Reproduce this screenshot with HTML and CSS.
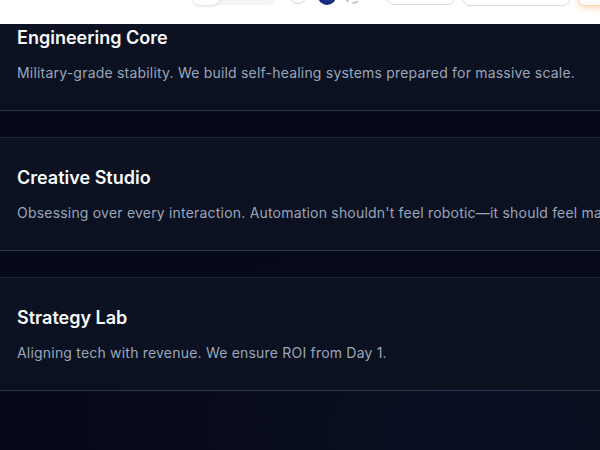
FILE: index.html
```html
<!DOCTYPE html>
<html lang="en">
<head>
<meta charset="utf-8">
<link rel="stylesheet" href="styles.css">
</head>
<body>
<header class="topbar">
  <div class="seg">
    <span class="seg-item active"></span>
    <span class="seg-item"></span>
  </div>
  <span class="dot dot-outline"></span>
  <span class="dot dot-blue"></span>
  <span class="dot dot-dashed"></span>
  <span class="btn btn-a"></span>
  <span class="btn btn-b"></span>
  <span class="btn btn-cta"></span>
</header>
<main class="list">
  <section class="card">
    <h3 class="card-title">Engineering Core</h3>
    <p class="card-text">Military-grade stability. We build self-healing systems prepared for massive scale.</p>
  </section>
  <section class="card">
    <h3 class="card-title">Creative Studio</h3>
    <p class="card-text">Obsessing over every interaction. Automation shouldn't feel robotic—it should feel magical.</p>
  </section>
  <section class="card">
    <h3 class="card-title">Strategy Lab</h3>
    <p class="card-text">Aligning tech with revenue. We ensure ROI from Day 1.</p>
  </section>
</main>
</body>
</html>
```
FILE: styles.css
```css
* { box-sizing: border-box; }
html, body {
  margin: 0;
  padding: 0;
  width: 600px;
  height: 450px;
  overflow: hidden;
}
body {
  font-family: Inter, "Noto Sans", sans-serif;
  background: radial-gradient(ellipse 400px 200px at 480px 430px, #0a1024 0%, rgba(10,16,36,0) 100%), #060919;
}
.topbar {
  position: fixed;
  top: 0;
  left: 0;
  right: 0;
  height: 24px;
  background: #ffffff;
  z-index: 10;
  overflow: hidden;
  display: flex;
  align-items: flex-end;
  padding: 0 0 19px 192px;
}
.seg {
  display: flex;
  width: 84px;
  height: 30px;
  background: #f3f4f6;
  border-radius: 8px;
  flex: none;
}
.seg-item { flex: none; }
.seg-item.active {
  width: 28px;
  height: 30px;
  background: #fff;
  border-radius: 8px;
  box-shadow: 0 1px 3px rgba(0,0,0,0.15);
}
.dot {
  flex: none;
  width: 18px;
  height: 18px;
  border-radius: 50%;
  margin-bottom: 1px;
}
.dot-outline { margin-left: 13px; border: 1px solid #d4d4d8; background: #fff; }
.dot-blue { margin-left: 11px; background: radial-gradient(circle at 50% 30%, #2f4fc8, #162a7a 70%); margin-bottom: 0; }
.dot-dashed { margin-left: 8px; border: 2px dashed #c4c4c8; }
.btn {
  flex: none;
  height: 30px;
  border: 1px solid #d9d9de;
  border-radius: 7px;
  background: #fff;
}
.btn-a { margin-left: 25px; width: 68px; }
.btn-b { margin-left: 8px; width: 107px; margin-bottom: -1px; }
.btn-cta {
  margin-left: 8px;
  width: 40px;
  margin-bottom: -1px;
  border-color: #fbd5a8;
  box-shadow: 0 2px 6px rgba(251,146,60,0.35);
}
.list {
  display: flex;
  flex-direction: column;
  gap: 26px;
  margin-top: -3px;
}
.card {
  background: linear-gradient(180deg, #0c1221 0%, #0b1120 100%);
  border-top: 1px solid #1c2436;
  border-bottom: 1px solid #2a3550;
  padding: 28px 0 27px 17px;
  white-space: nowrap;
}
.card-title {
  margin: 0;
  font-size: 18px;
  line-height: 24px;
  font-weight: 600;
  color: #f8fafc;
}
.card-text {
  margin: 13px 0 0;
  font-size: 14px;
  line-height: 20px;
  color: #9aa6ba;
  letter-spacing: 0.2px;
}
```
